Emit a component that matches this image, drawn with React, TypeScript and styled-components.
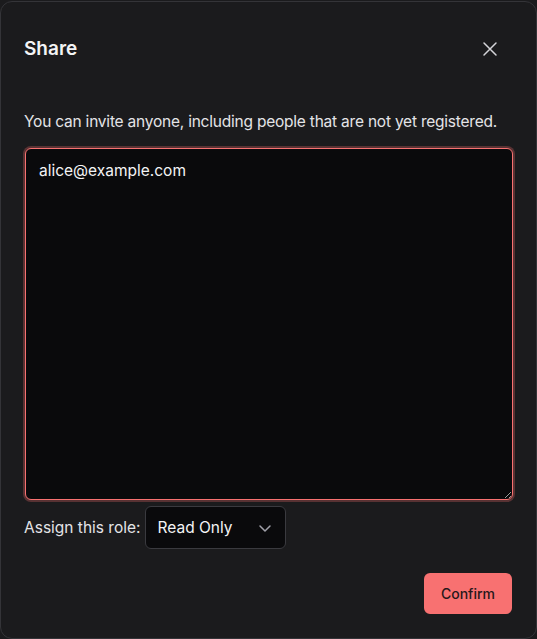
import React, { useState } from 'react'
import styled, { createGlobalStyle } from 'styled-components'

const GlobalStyle = createGlobalStyle`
  html, body {
    margin: 0;
    padding: 0;
    background: #1b1b1d;
  }
  body {
    font-family: Inter, "Noto Sans", sans-serif;
    -webkit-font-smoothing: antialiased;
  }
  * {
    box-sizing: border-box;
  }
`

const Dialog = styled.div`
  width: 537px;
  height: 638px;
  margin-top: 1px;
  background: #1b1b1d;
  border: 1px solid #343438;
  border-radius: 12px;
  padding: 24px 24px 24px 23px;
  display: flex;
  flex-direction: column;
  color: #f2f2f3;
`

const Header = styled.div`
  display: flex;
  align-items: center;
  justify-content: space-between;
  height: 46px;
`

const Title = styled.h2`
  margin: 0;
  font-size: 19px;
  font-weight: 600;
  color: #f4f4f5;
`

const CloseButton = styled.button`
  width: 28px;
  height: 28px;
  margin-right: 8px;
  border: none;
  background: transparent;
  color: #d4d4d8;
  display: flex;
  align-items: center;
  justify-content: center;
  padding: 0;
  cursor: pointer;
`

const Description = styled.p`
  margin: 38px 0 14px;
  font-size: 15.5px;
  line-height: 24px;
  color: #e4e4e7;
  letter-spacing: -0.22px;
`

const Invite = styled.textarea`
  display: block;
  width: 488px;
  height: 353px;
  margin-left: 1px;
  padding: 10px 13px;
  background: #0a0a0c;
  color: #f4f4f5;
  border: 1px solid #f87171;
  border-radius: 6px;
  box-shadow: 0 0 0 2px rgba(248, 113, 113, 0.28);
  font-family: Inter, "Noto Sans", sans-serif;
  font-size: 15.5px;
  line-height: 24px;
  outline: none;
  resize: vertical;
  caret-color: #ffffff;
`

const RoleRow = styled.div`
  display: flex;
  align-items: center;
  gap: 4px;
  margin-top: 6px;
`

const RoleLabel = styled.span`
  font-size: 15.5px;
  color: #e4e4e7;
`

const Select = styled.button`
  width: 141px;
  height: 43px;
  display: flex;
  align-items: center;
  justify-content: space-between;
  padding: 0 12px 0 12px;
  background: #0a0a0c;
  border: 1px solid #3a3a3f;
  border-radius: 6px;
  color: #f4f4f5;
  font-family: Inter, "Noto Sans", sans-serif;
  font-size: 15.5px;
  cursor: pointer;
`

const Footer = styled.div`
  display: flex;
  justify-content: flex-end;
  margin-top: 24px;
`

const ConfirmButton = styled.button`
  width: 88px;
  height: 41px;
  background: #f87171;
  border: none;
  border-radius: 6px;
  color: #27181a;
  font-family: Inter, "Noto Sans", sans-serif;
  font-size: 14px;
  font-weight: 500;
  cursor: pointer;
`

const XIcon = () => (
  <svg width="16" height="16" viewBox="0 0 16 16" fill="none" stroke="currentColor" strokeWidth="1.5" strokeLinecap="round">
    <path d="M2 2l12 12M14 2L2 14" />
  </svg>
)

const Chevron = () => (
  <svg width="16" height="16" viewBox="0 0 16 16" fill="none" stroke="#a1a1aa" strokeWidth="1.5" strokeLinecap="round" strokeLinejoin="round">
    <path d="M3 6l5 5 5-5" />
  </svg>
)

export default function App() {
  const [emails, setEmails] = useState('alice@example.com')

  return (
    <>
      <GlobalStyle />
      <Dialog>
        <Header>
          <Title>Share</Title>
          <CloseButton aria-label="Close">
            <XIcon />
          </CloseButton>
        </Header>
        <Description>
          You can invite anyone, including people that are not yet registered.
        </Description>
        <Invite
          value={emails}
          onChange={(e) => setEmails(e.target.value)}
          autoFocus
        />
        <RoleRow>
          <RoleLabel>Assign this role:</RoleLabel>
          <Select>
            Read Only
            <Chevron />
          </Select>
        </RoleRow>
        <Footer>
          <ConfirmButton>Confirm</ConfirmButton>
        </Footer>
      </Dialog>
    </>
  )
}
